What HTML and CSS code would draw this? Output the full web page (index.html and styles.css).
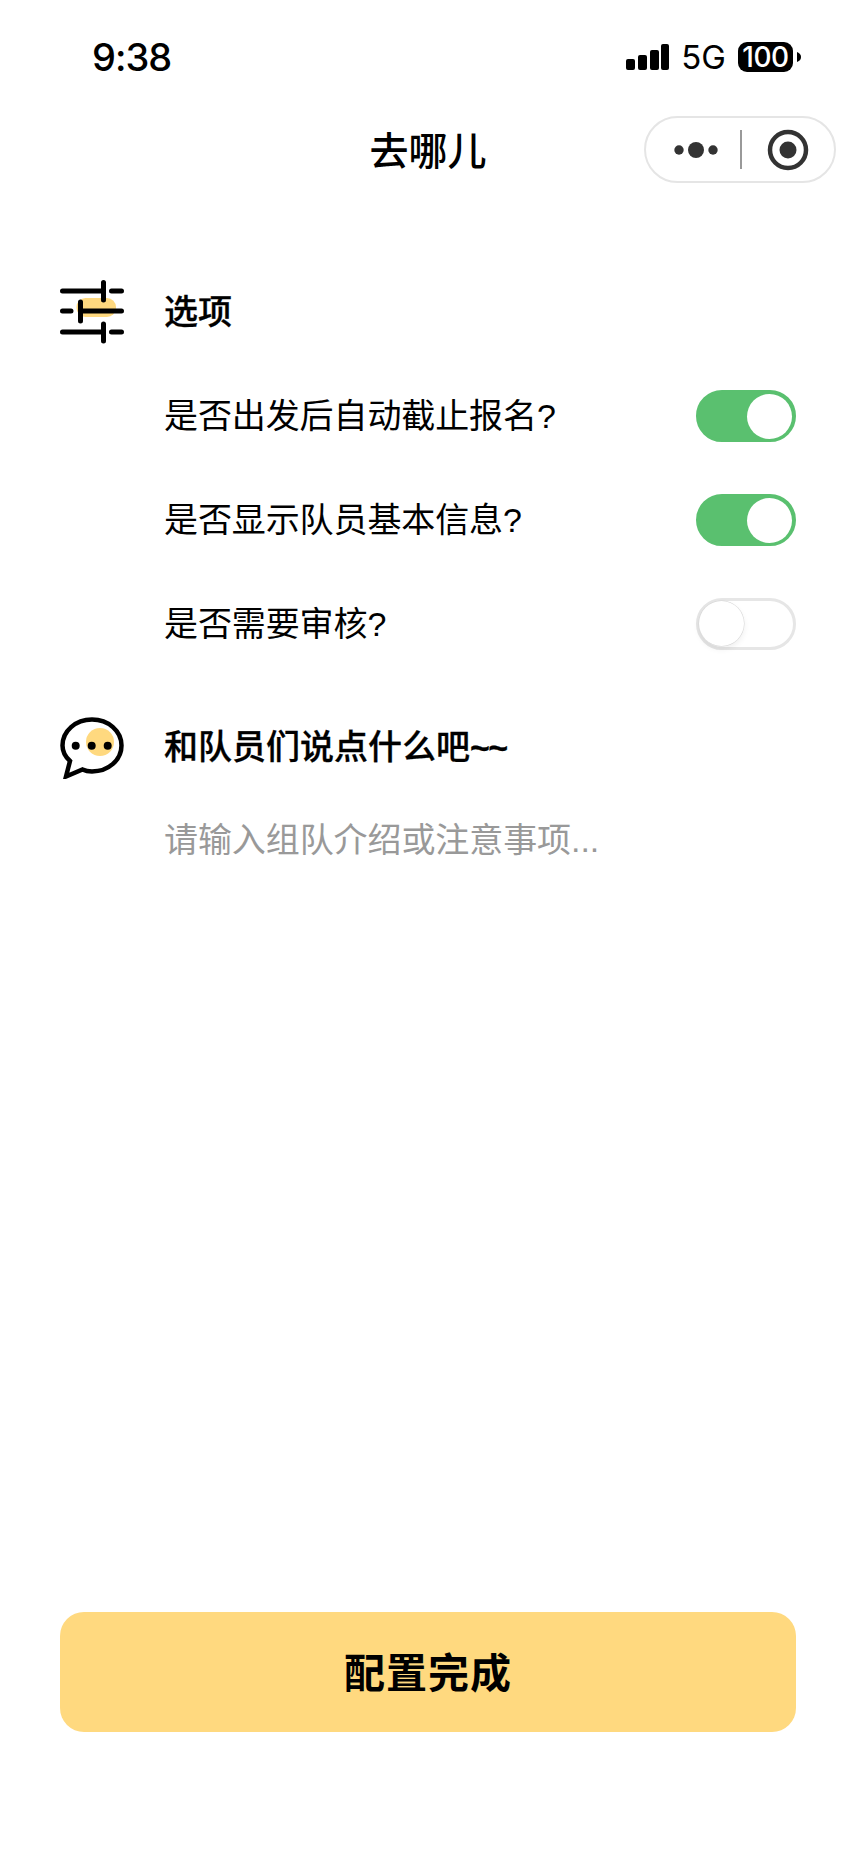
FILE: index.html
```html
<!DOCTYPE html>
<html lang="zh-CN">
<head>
<meta charset="utf-8">
<title>去哪儿</title>
<link rel="stylesheet" href="styles.css">
</head>
<body>
<div class="page">
  <header class="status">
    <span class="time">9:38</span>
    <div class="status-right">
      <svg class="signal" width="44" height="26" viewBox="0 0 44 26"><rect x="0" y="15" width="9" height="11" rx="2"/><rect x="12" y="11" width="9" height="15" rx="2"/><rect x="24" y="6" width="9" height="20" rx="2"/><rect x="35" y="0" width="8" height="26" rx="2"/></svg>
      <span class="net">5G</span>
      <span class="battery">100</span>
      <svg class="battery-tip" width="4" height="10" viewBox="0 0 4 10"><path d="M0 0C3 1 4 3 4 5S3 9 0 10Z"/></svg>
    </div>
  </header>
  <nav class="nav">
    <span></span>
    <h1 class="title">去哪儿</h1>
    <div class="capsule">
      <svg width="46" height="18" viewBox="0 0 46 18" class="cap-more"><circle cx="6" cy="9" r="4.7"/><circle cx="23" cy="9" r="8"/><circle cx="40" cy="9" r="4.7"/></svg>
      <span class="cap-line"></span>
      <svg width="42" height="42" viewBox="0 0 42 42" class="cap-rec"><circle cx="21" cy="21" r="18" class="rec-ring"/><circle cx="21" cy="21" r="8.5"/></svg>
    </div>
  </nav>
  <main class="content">
    <section class="heading first">
      <svg class="icon" width="64" height="64" viewBox="0 0 64 64">
        <rect class="fill-y" x="16.5" y="18" width="39.5" height="19" rx="9"/>
        <path class="ink" d="M2.5 11H43M43.5 2.5V20M51.5 11H61.5M2.5 31H11M20.5 22V41M20.5 31H61.5M2.5 52H43M43.5 44V61M51.5 52H61.5"/>
      </svg>
      <h2 class="heading-text">选项</h2>
    </section>
    <div class="rows">
      <div class="row"><span class="row-label">是否出发后自动截止报名?</span><span class="switch on"><i class="knob"></i></span></div>
      <div class="row"><span class="row-label">是否显示队员基本信息?</span><span class="switch on"><i class="knob"></i></span></div>
      <div class="row"><span class="row-label">是否需要审核?</span><span class="switch"><i class="knob"></i></span></div>
    </div>
    <section class="heading second">
      <svg class="icon" width="64" height="64" viewBox="0 0 64 64">
        <circle class="fill-y" cx="40" cy="27" r="14"/>
        <path class="ink-thin" d="M6 61.5L10 46C5 41.5 2.5 36 2.5 30.5C2.5 16 15.5 4.5 32 4.5S61.5 16 61.5 30.5S48.5 56.5 32 56.5C28.5 56.5 25.5 56 22.5 54.5Z"/>
        <circle cx="15.7" cy="30.7" r="4"/><circle cx="31.7" cy="30.7" r="4"/><circle cx="47.7" cy="30.7" r="4"/>
      </svg>
      <h2 class="heading-text">和队员们说点什么吧<span class="tilde">~~</span></h2>
    </section>
    <div class="placeholder">请输入组队介绍或注意事项...</div>
  </main>
  <footer class="footer">
    <button class="done">配置完成</button>
  </footer>
</div>
</body>
</html>
```
FILE: styles.css
```css
* { box-sizing: border-box; }
html, body { margin: 0; padding: 0; background: #fff; }
body { font-family: "Liberation Sans", "Noto Sans CJK SC", sans-serif; color: #000; }
.page { width: 856px; height: 1852px; display: flex; flex-direction: column; overflow: hidden; }
.status { height: 100px; padding: 14px 0 0 92px; display: flex; align-items: center; justify-content: space-between; }
.time { font-family: Inter, "Liberation Sans", sans-serif; font-size: 38px; font-weight: 500; line-height: 1; letter-spacing: -1px; }
.status-right { display: flex; align-items: center; margin-right: 55px; }
.signal { margin-right: 11px; }
.net { font-family: Inter, "Liberation Sans", sans-serif; font-size: 33px; font-weight: 400; line-height: 1; margin-right: 12px; }
.battery { width: 55px; height: 30px; background: #000; color: #fff; border-radius: 9px; font-size: 28px; font-weight: 500; line-height: 30px; text-align: center; font-family: Inter, "Liberation Sans", sans-serif; letter-spacing: -.5px; }
.battery-tip { margin-left: 4px; }
.nav { height: 100px; display: grid; grid-template-columns: 1fr auto 1fr; align-items: center; }
.title { margin: 0 0 4px; font-family: "Noto Sans CJK SC", sans-serif; font-size: 39px; font-weight: 500; line-height: 1; }
.capsule { justify-self: end; margin: 0 20px 1px 0; width: 192px; height: 67px; border: 2px solid #e5e5e5; border-radius: 34px; display: flex; align-items: center; padding-left: 27px; }
.cap-more, .cap-rec { fill: #333; flex: none; }
.cap-line { width: 2px; height: 39px; background: #999; margin-left: 21px; margin-right: 25px; flex: none; }
.rec-ring { fill: none; stroke: #333; stroke-width: 4.5px; }
.content { padding: 0 60px; }
.heading { display: flex; align-items: center; gap: 40px; height: 64px; }
.first { margin-top: 80px; }
.second { margin-top: 39px; }
.icon { flex: none; }
.fill-y { fill: #ffd97f; }
.ink { fill: none; stroke: #000; stroke-width: 5px; stroke-linecap: round; }
.ink-thin { fill: none; stroke: #000; stroke-width: 4.5px; stroke-linejoin: miter; }
.heading-text { margin: 0; font-family: "Liberation Sans", "Noto Sans CJK SC", sans-serif; font-size: 34px; font-weight: 500; line-height: 1; -webkit-text-stroke: .3px #000; }
.tilde { font-weight: 700; letter-spacing: -1.5px; }
.rows { margin-top: 20px; padding-left: 104px; }
.row { height: 104px; display: flex; align-items: center; justify-content: space-between; font-family: "Liberation Sans", "Noto Sans CJK SC", sans-serif; font-size: 34px; font-weight: 400; }
.row-label { line-height: 1.2; letter-spacing: -.1px; }
.switch { width: 100px; height: 52px; border-radius: 26px; background: #fff; border: 3px solid #e6e6e6; position: relative; flex: none; }
.switch.on { background: #5ac06f; border-color: #5ac06f; }
.knob { position: absolute; top: 0; left: 0; width: 45px; height: 45px; border-radius: 50%; background: #fff; box-shadow: 0 0 0 .5px #d5d5d5, 0 3px 6px rgba(0,0,0,.07); }
.switch.on .knob { top: 1px; left: 48px; width: 45px; height: 45px; box-shadow: none; }
.placeholder { margin-top: 36px; padding-left: 104px; font-family: "Liberation Sans", "Noto Sans CJK SC", sans-serif; font-size: 34px; line-height: 50px; letter-spacing: -.08px; color: #999; }
.footer { margin-top: auto; padding: 0 60px 120px; }
.done { display: block; width: 100%; height: 120px; border: 0; border-radius: 24px; padding: 0 0 4px; background: #ffd97f; color: #000; font-family: "Noto Sans CJK SC", sans-serif; font-size: 41px; font-weight: 700; letter-spacing: 1px; }
```
